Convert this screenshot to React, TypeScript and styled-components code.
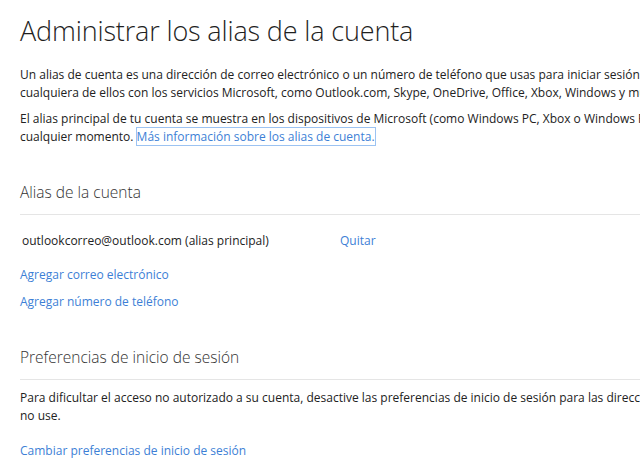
import React from "react";
import styled, { createGlobalStyle } from "styled-components";

const Global = createGlobalStyle`
  html, body { margin: 0; padding: 0; background: #fff; overflow: hidden; }
  body { font-family: "Segoe UI", "Open Sans", "Noto Sans", sans-serif; color: #222; }
`;

const Page = styled.main`
  width: 900px;
  padding: 12px 0 0 20px;
  box-sizing: border-box;
`;

const Title = styled.h1`
  margin: 0 0 16px 0;
  font-size: 27px;
  font-weight: 300;
  line-height: 38px;
  color: #1f1f1f;
  letter-spacing: -0.15px;
`;

const Para = styled.p`
  margin: 0 0 8px 0;
  font-size: 12px;
  line-height: 18px;
  white-space: nowrap;
`;

const Link = styled.a<{ $focused?: boolean }>`
  color: #3d7fd6;
  text-decoration: none;
  cursor: pointer;
  ${(p) => (p.$focused ? "outline: 1px solid #9cc3f2; outline-offset: 0px;" : "")}
`;

const Section = styled.section<{ $gap: number }>`
  margin-top: ${(p) => p.$gap}px;
`;

const SectionTitle = styled.h2`
  margin: 0;
  padding-bottom: 10px;
  font-size: 15.5px;
  font-weight: 300;
  line-height: 24px;
  color: #333;
  border-bottom: 1px solid #e5e5e5;
`;

const AliasRow = styled.div`
  display: grid;
  grid-template-columns: 318px auto;
  margin-top: 17px;
  padding-left: 2px;
  font-size: 12px;
  line-height: 18px;
`;

const LinkList = styled.div<{ $top: number }>`
  display: flex;
  flex-direction: column;
  gap: 9px;
  margin-top: ${(p) => p.$top}px;
  font-size: 12px;
  line-height: 18px;
`;

const Body = styled.div`
  margin-top: 9px;
`;

export default function App() {
  return (
    <>
      <Global />
      <Page>
        <Title>Administrar los alias de la cuenta</Title>
        <Para>
          Un alias de cuenta es una dirección de correo electrónico o un número de teléfono que usas para iniciar sesión en tu cuenta Microsoft. Puedes usar
          <br />
          cualquiera de ellos con los servicios Microsoft, como Outlook.com, Skype, OneDrive, Office, Xbox, Windows y muchos más.
        </Para>
        <Para>
          El alias principal de tu cuenta se muestra en los dispositivos de Microsoft (como Windows PC, Xbox o Windows Phone). Puedes cambiarlo en
          <br />
          cualquier momento. <Link $focused>Más información sobre los alias de cuenta.</Link>
        </Para>
        <Section $gap={34}>
          <SectionTitle>Alias de la cuenta</SectionTitle>
          <AliasRow>
            <span>outlookcorreo@outlook.com (alias principal)</span>
            <Link>Quitar</Link>
          </AliasRow>
          <LinkList $top={16}>
            <Link>Agregar correo electrónico</Link>
            <Link>Agregar número de teléfono</Link>
          </LinkList>
        </Section>
        <Section $gap={34}>
          <SectionTitle>Preferencias de inicio de sesión</SectionTitle>
          <Body>
            <Para>
              Para dificultar el acceso no autorizado a su cuenta, desactive las preferencias de inicio de sesión para las direcciones de correo electrónico y números de teléfono que
              <br />
              no use.
            </Para>
          </Body>
          <LinkList $top={17}>
            <Link>Cambiar preferencias de inicio de sesión</Link>
          </LinkList>
        </Section>
      </Page>
    </>
  );
}
